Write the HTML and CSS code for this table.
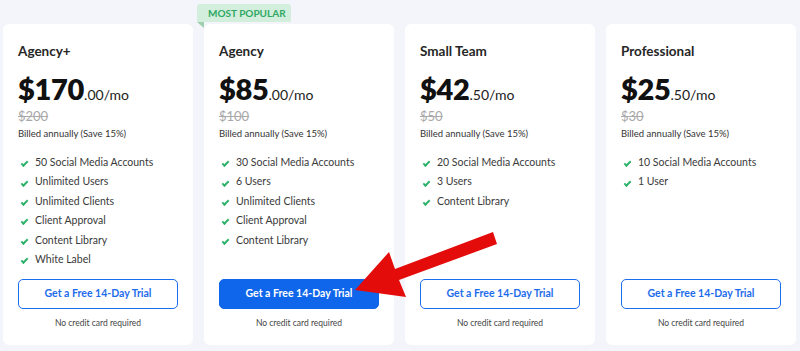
FILE: index.html
```html
<!DOCTYPE html>
<html>
<head>
<meta charset="utf-8">
<link rel="stylesheet" href="styles.css">
</head>
<body>
<div class="page">
  <div class="card">
    <h3 class="title">Agency+</h3>
    <div class="price"><span class="big">$170</span><span class="cents">.00/mo</span></div>
    <div class="old">$200</div>
    <div class="billed">Billed annually (Save 15%)</div>
    <ul class="features">
      <li><span class="check"></span>50 Social Media Accounts</li>
      <li><span class="check"></span>Unlimited Users</li>
      <li><span class="check"></span>Unlimited Clients</li>
      <li><span class="check"></span>Client Approval</li>
      <li><span class="check"></span>Content Library</li>
      <li><span class="check"></span>White Label</li>
    </ul>
    <a class="btn">Get a Free 14-Day Trial</a>
    <div class="note">No credit card required</div>
  </div>
  <div class="card popular">
    <div class="badge">MOST POPULAR</div>
    <h3 class="title">Agency</h3>
    <div class="price"><span class="big">$85</span><span class="cents">.00/mo</span></div>
    <div class="old">$100</div>
    <div class="billed">Billed annually (Save 15%)</div>
    <ul class="features">
      <li><span class="check"></span>30 Social Media Accounts</li>
      <li><span class="check"></span>6 Users</li>
      <li><span class="check"></span>Unlimited Clients</li>
      <li><span class="check"></span>Client Approval</li>
      <li><span class="check"></span>Content Library</li>
    </ul>
    <a class="btn primary">Get a Free 14-Day Trial</a>
    <div class="note">No credit card required</div>
  </div>
  <div class="card">
    <h3 class="title">Small Team</h3>
    <div class="price"><span class="big">$42</span><span class="cents">.50/mo</span></div>
    <div class="old">$50</div>
    <div class="billed">Billed annually (Save 15%)</div>
    <ul class="features">
      <li><span class="check"></span>20 Social Media Accounts</li>
      <li><span class="check"></span>3 Users</li>
      <li><span class="check"></span>Content Library</li>
    </ul>
    <a class="btn">Get a Free 14-Day Trial</a>
    <div class="note">No credit card required</div>
  </div>
  <div class="card">
    <h3 class="title">Professional</h3>
    <div class="price"><span class="big">$25</span><span class="cents">.50/mo</span></div>
    <div class="old">$30</div>
    <div class="billed">Billed annually (Save 15%)</div>
    <ul class="features">
      <li><span class="check"></span>10 Social Media Accounts</li>
      <li><span class="check"></span>1 User</li>
    </ul>
    <a class="btn">Get a Free 14-Day Trial</a>
    <div class="note">No credit card required</div>
  </div>
  <svg class="arrow" width="800" height="351" viewBox="0 0 800 351">
    <polygon points="355,290 389,252 395,269 493,232 497,244 399,280 406,297" fill="#e40b0b"/>
  </svg>
</div>
</body>
</html>
```
FILE: styles.css
```css
* { box-sizing: border-box; }
html, body { margin: 0; padding: 0; }
body {
  background: #f3f5fb;
  font-family: "Lato", "Open Sans", sans-serif;
  color: #2b2b2b;
  width: 800px;
  height: 351px;
  overflow: hidden;
}
.page {
  position: relative;
  display: flex;
  gap: 11px;
  padding: 24px 4px 0 3px;
}
.card {
  position: relative;
  width: 190px;
  height: 321px;
  background: #fff;
  border-radius: 6px;
  padding: 18px 15px 16px;
  display: flex;
  flex-direction: column;
}
.badge {
  position: absolute;
  left: -7px;
  top: -20px;
  height: 18px;
  width: 94px;
  background: #d3eedc;
  color: #2fa863;
  font-size: 10px;
  font-weight: 700;
  line-height: 18px;
  padding-left: 11px;
  border-radius: 3px 3px 0 0;
}
.badge::after {
  content: "";
  position: absolute;
  left: 0;
  top: 18px;
  width: 0;
  height: 0;
  border-top: 6px solid #9fcfae;
  border-left: 7px solid transparent;
}
.title {
  margin: 0;
  font-size: 13.5px;
  font-weight: 700;
  line-height: 18px;
  color: #262626;
}
.price {
  margin-top: 14px;
  height: 30px;
  line-height: 30px;
  color: #111;
}
.big {
  font-size: 29px;
  font-weight: 800;
  letter-spacing: -0.3px;
}
.cents {
  font-size: 14px;
  color: #222;
}
.old {
  margin-top: 4px;
  font-size: 13px;
  line-height: 16px;
  color: #a9a9a9;
  text-decoration: line-through;
}
.billed {
  margin-top: 3px;
  font-size: 9.5px;
  line-height: 14px;
  color: #333;
}
.features {
  list-style: none;
  margin: 12px 0 0;
  padding: 0;
}
.features li {
  display: flex;
  align-items: center;
  font-size: 10.5px;
  line-height: 19.4px;
  color: #3a3a3a;
}
.check {
  width: 7px;
  height: 4px;
  border-left: 2px solid #2eb26b;
  border-bottom: 2px solid #2eb26b;
  transform: rotate(-45deg);
  margin: 0 7px -1px 3px;
  flex: none;
}
.btn {
  margin-top: auto;
  display: block;
  height: 30px;
  line-height: 27px;
  border: 1.5px solid #1c6ef0;
  border-radius: 5px;
  text-align: center;
  font-size: 10.5px;
  font-weight: 700;
  color: #1d6cec;
}
.btn.primary {
  background: #0f66ea;
  color: #fff;
  border-color: #0f66ea;
}
.note {
  margin-top: 8px;
  font-size: 8.5px;
  line-height: 12px;
  text-align: center;
  color: #444;
}
.arrow {
  position: absolute;
  left: 0;
  top: 0;
  pointer-events: none;
}
```
